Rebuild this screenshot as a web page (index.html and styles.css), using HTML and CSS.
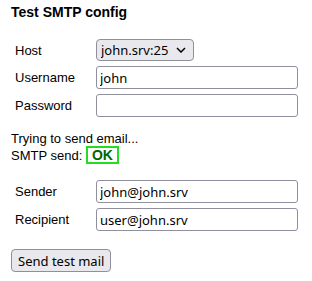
FILE: index.html
```html
<!DOCTYPE html>
<html lang="en">

<head>
     <meta charset="UTF-8">
     <meta name="viewport" content="width=device-width, initial-scale=1.0">
     <title>Test SMTP config</title>
     <link rel="stylesheet" href="styles.css">
</head>

<body>
     <div class="smtp-test">
          <h3>Test SMTP config</h3>

          <div class="form-grid">
               <label for="host">Host</label>
               <div>
                    <div class="select-wrap">
                         <select id="host" class="host-select">
                              <option>john.srv:25</option>
                         </select>
                         <svg class="chevron" width="10" height="6" viewBox="0 0 10 6">
                              <path d="M1 1 L5 5 L9 1" fill="none" stroke="#000" stroke-width="1.5" />
                         </svg>
                    </div>
               </div>
               <label for="username">Username</label>
               <input type="text" id="username" value="john">
               <label for="password">Password</label>
               <input type="password" id="password">
          </div>

          <div class="status">
               <p>Trying to send email...</p>
               <p>SMTP send: <span class="ok">OK</span></p>
          </div>

          <div class="form-grid">
               <label for="sender">Sender</label>
               <input type="text" id="sender" value="john@john.srv">
               <label for="recipient">Recipient</label>
               <input type="text" id="recipient" value="user@john.srv">
          </div>

          <button type="button" class="send-btn">Send test mail</button>
     </div>
</body>

</html>
```

FILE: styles.css
```css
/* Base styles */
body {
     margin: 0;
     background-color: #ffffff;
     color: #000000;
     font-family: "Liberation Sans", Arial, sans-serif;
     font-size: 13px;
}

.smtp-test {
     padding: 4px 11px;
}

.smtp-test h3 {
     margin: 0 0 19px;
     font-size: 14px;
     line-height: 16px;
}

/* Label / field rows */
.form-grid {
     display: grid;
     grid-template-columns: 85px 202px;
     row-gap: 5px;
     align-items: center;
}

.form-grid label {
     padding-left: 4px;
}

.form-grid input,
.form-grid select,
.send-btn {
     font-family: "Noto Sans", sans-serif;
     font-size: 13px;
     color: #000000;
     box-sizing: border-box;
}

.form-grid input {
     width: 202px;
     height: 23px;
     padding: 0 3px;
     border: 1px solid #8f8f9d;
     border-radius: 3px;
     background: #ffffff;
}

/* Host dropdown with its own chevron */
.select-wrap {
     position: relative;
     display: inline-block;
     vertical-align: middle;
}

.host-select {
     -webkit-appearance: none;
     appearance: none;
     width: 98px;
     height: 22px;
     padding: 0 24px 0 4px;
     border: 1px solid #8f8f9d;
     border-radius: 4px;
     background: #e9e9ed;
}

.select-wrap .chevron {
     position: absolute;
     right: 8px;
     top: 8px;
     pointer-events: none;
}

/* Send status */
.status {
     margin: 14px 0 16px;
}

.status p {
     margin: 0;
     line-height: 15px;
}

.ok {
     display: inline-block;
     padding: 0 4px;
     border: 2px solid #22dd22;
     color: #006600;
     font-weight: bold;
     font-size: 14px;
     line-height: 14px;
}

.send-btn {
     margin-top: 18px;
     height: 23px;
     padding: 0 6px;
     border: 1px solid #8f8f9d;
     border-radius: 4px;
     background: #e9e9ed;
}
```
